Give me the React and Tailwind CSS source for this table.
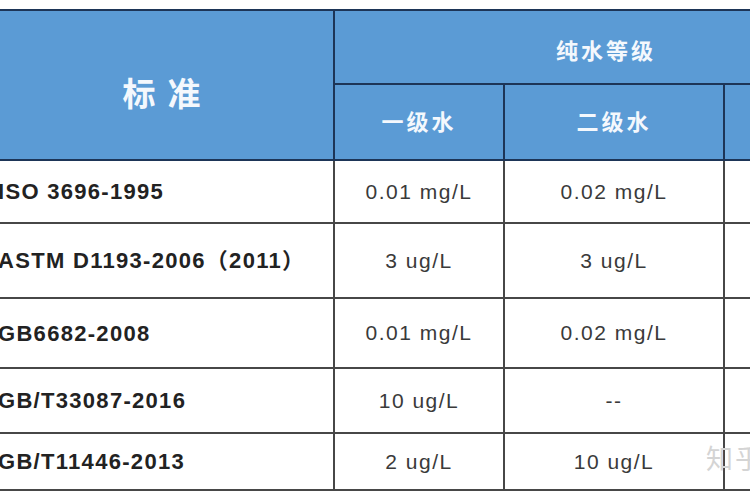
const rows = [
  { name: "ISO 3696-1995", a: "0.01 mg/L", b: "0.02 mg/L", c: "", h: "h-[63px]" },
  { name: "ASTM D1193-2006（2011）", a: "3 ug/L", b: "3 ug/L", c: "", h: "h-[75px]" },
  { name: "GB6682-2008", a: "0.01 mg/L", b: "0.02 mg/L", c: "", h: "h-[70px]" },
  { name: "GB/T33087-2016", a: "10 ug/L", b: "--", c: "", h: "h-[65px]" },
  { name: "GB/T11446-2013", a: "2 ug/L", b: "10 ug/L", c: "", h: "h-[57px]" },
];

const font = { fontFamily: '"Liberation Sans", Arial, "Noto Sans CJK SC", sans-serif' };

export default function App() {
  return (
    <div
      className="relative w-[750px] h-[500px] overflow-hidden bg-white pt-[9px]"
      style={font}
    >
      <table className="table-fixed border-collapse ml-[-20px] w-[897px]">
        <colgroup>
          <col className="w-[353px]" />
          <col className="w-[170px]" />
          <col className="w-[220px]" />
          <col className="w-[154px]" />
        </colgroup>
        <thead className="bg-[#5b9bd5] text-[#f4f8fd] font-bold">
          <tr className="h-[74px]">
            <th
              rowSpan={2}
              className="border-2 border-[#1d3557] pt-5 pl-[20px] text-[33px] tracking-[12px] font-bold"
            >
              标准
            </th>
            <th
              colSpan={3}
              className="border-2 border-[#1d3557] pt-2 text-[22px] tracking-[3px] font-bold"
            >
              纯水等级
            </th>
          </tr>
          <tr className="h-[76px]">
            <th className="border-2 border-[#1d3557] text-[22px] tracking-[3px] font-bold">一级水</th>
            <th className="border-2 border-[#1d3557] text-[22px] tracking-[3px] font-bold">二级水</th>
            <th className="border-2 border-[#1d3557] text-[22px] tracking-[3px] font-bold">三级水</th>
          </tr>
        </thead>
        <tbody>
          {rows.map((r) => (
            <tr key={r.name} className={r.h}>
              <td className="border-2 border-[#474747] pl-[16px] text-left text-[22px] tracking-[1.3px] font-bold text-[#222]">
                {r.name}
              </td>
              <td className="border-2 border-[#474747] text-center text-[21px] tracking-[1.5px] text-[#3a3a3a]">
                {r.a}
              </td>
              <td className="border-2 border-[#474747] text-center text-[21px] tracking-[1.5px] text-[#3a3a3a]">
                {r.b}
              </td>
              <td className="border-2 border-[#474747] text-center text-[21px] text-[#3a3a3a]">
                {r.c}
              </td>
            </tr>
          ))}
        </tbody>
      </table>
      <span className="absolute left-[706px] top-[440px] whitespace-nowrap text-[27px] text-[#d4d4d4] tracking-[2px]">
        知乎
      </span>
    </div>
  );
}
